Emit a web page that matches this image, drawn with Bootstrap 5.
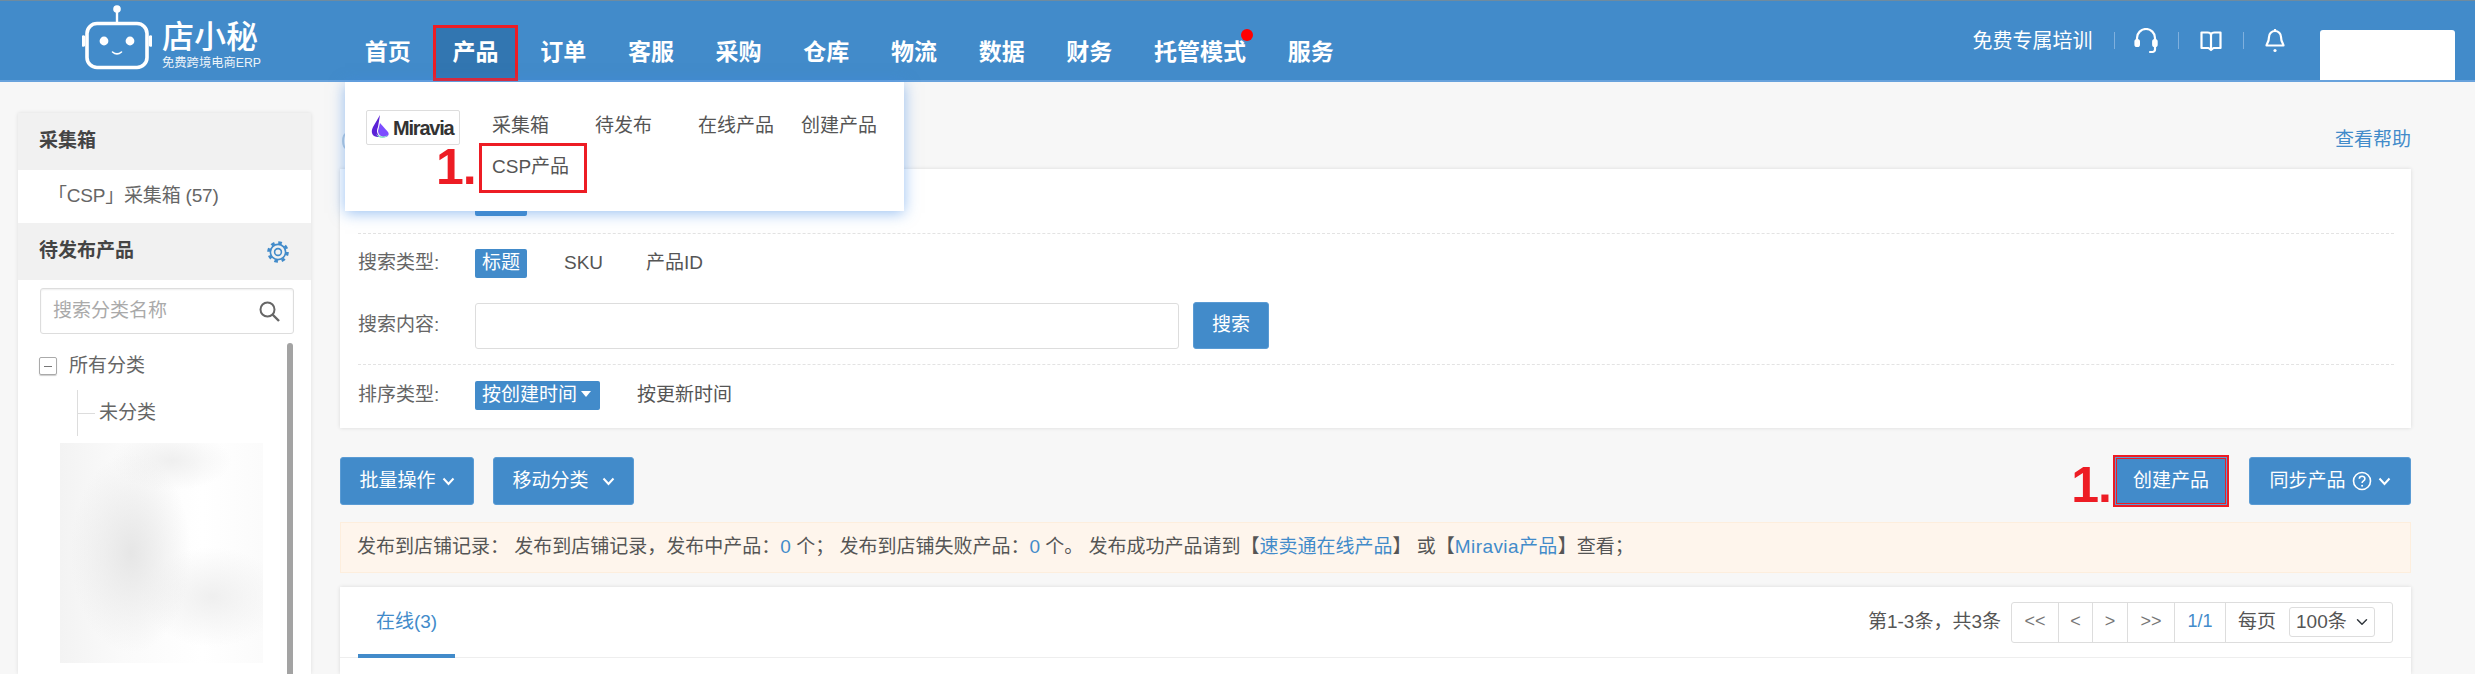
<!DOCTYPE html>
<html lang="zh-CN">
<head>
<meta charset="utf-8">
<title>店小秘</title>
<link href="https://cdn.jsdelivr.net/npm/bootstrap@5.3.0/dist/css/bootstrap.min.css" rel="stylesheet">
<style>
html,body{height:674px;overflow:hidden;}
body{background:#f7f7f7;color:#555;font-family:"Liberation Sans","Noto Sans CJK SC",sans-serif;font-size:19px;line-height:1.3;}
a{text-decoration:none;color:#428bca;}
.top-bar{height:82px;background:#428bca;border-top:1px solid #6f8b9f;border-bottom:2px solid #68a2dc;color:#fff;}
.logo-area{width:344px;padding:3px 0 0 82px;flex:none;}
.logo-text{margin-left:10px;padding-top:15px;}
.logo-main{font-size:32px;line-height:36px;font-weight:500;}
.logo-sub{font-size:12.3px;line-height:14px;margin-top:1px;opacity:.9;}
.main-nav{margin:24px 0 0;padding:0;list-style:none;}
.main-nav a{display:flex;align-items:center;height:56px;padding:0 20.85px;font-size:23px;font-weight:700;color:#fff;position:relative;}
.main-nav a.is-current{background:#3276b1;box-shadow:inset 0 0 0 3px #ed1c24;margin:0 1.35px;padding:0 19.5px;}
.red-dot{position:absolute;width:12px;height:12px;border-radius:50%;background:#f00;right:14px;top:4px;}
.top-right{margin-left:auto;padding-right:20px;align-self:stretch;}
.train{font-size:20px;padding-right:21px;}
.top-ico{width:64.5px;height:17px;border-left:1px solid #7fb0de;display:flex;align-items:center;justify-content:center;}
.user-box{width:135px;height:50px;background:#fff;border-radius:3px 3px 0 0;margin-left:13px;align-self:flex-end;}
.page-body{padding-left:18px;height:592px;}
.side-col{width:293px;margin-top:31px;background:#fff;box-shadow:0 0 4px rgba(0,0,0,.1);flex:none;overflow:hidden;}
.side-head{height:57px;background:#f1f1f1;padding:0 21px;font-weight:700;color:#444;}
.side-item{height:53px;padding-left:30px;color:#666;font-size:19px;letter-spacing:-.2px;}
.side-search{margin:8px 17px 0 22px;height:46px;border:1px solid #ddd;border-radius:3px;padding:0 12px;color:#aaa;box-shadow:inset 0 1px 2px rgba(0,0,0,.07);}
.tree-wrap{position:relative;padding:23px 0 0 21px;}
.tree-bar{position:absolute;left:269px;top:9px;width:6px;height:400px;background:#a3a3a3;border-radius:3px;}
.minus-box{width:18px;height:18px;border:1px solid #aaa;border-radius:2px;box-shadow:0 1px 1px rgba(0,0,0,.2);margin-right:12px;display:flex;align-items:center;justify-content:center;}
.minus-box i{display:block;width:8px;height:1px;background:#777;}
.tree-root{color:#666;height:18px;}
.tree-child{margin:15px 0 0 38px;height:46px;border-left:1px solid #ddd;color:#666;}
.tree-child i{display:block;width:17px;height:1px;background:#ddd;margin-right:4px;}
.blur-area{width:203px;height:220px;margin:7px 0 0 21px;background:radial-gradient(ellipse 60px 100px at 35% 50%,#e6e6e6,rgba(230,230,230,0) 100%),radial-gradient(ellipse 70px 50px at 75% 70%,#efefef,rgba(240,240,240,0)),radial-gradient(ellipse 60px 30px at 55% 8%,#efefef,rgba(240,240,240,0)),linear-gradient(90deg,#f3f3f3,#fafafa 30%,#fff 70%,#fbfbfb);}
.main-col{margin-left:29px;width:2071px;flex:none;}
.help-row{height:87px;padding-top:29px;}
.panel-box{background:#fff;box-shadow:0 0 4px rgba(0,0,0,.12);}
.search-panel{height:259px;padding:0 17px 0 18px;}
.filter-row{border-bottom:1px dashed #e3e3e3;}
.filter-first{height:65px;padding-top:18px;}
.filter-mid{height:131px;padding-top:15px;}
.filter-last{padding-top:16px;}
.filter-label{width:117px;color:#666;flex:none;}
.pick-chip{height:29px;padding:0 7px;background:#428bca;color:#fff;border-radius:2px;display:inline-flex;align-items:center;}
.pick-text{margin-left:37px;color:#555;}
.pick-text.wide{margin-left:43px;}
.caret-down{width:0;height:0;border:5px solid transparent;border-top:6px solid #fff;border-bottom:0;margin-left:4px;margin-top:-4px;}
.chip-wide{padding-right:6px;width:125px;}
.search-input{width:704px;height:46px;border:1px solid #ddd;border-radius:3px;}
.ink-btn{background:#428bca;border:1px solid #5a9bd4;color:#fff;font-size:19px;height:48px;border-radius:3px;padding:0;display:inline-flex;align-items:center;justify-content:center;}
.ink-btn:hover{background:#428bca;color:#fff;}
.w-search{width:76px;margin-left:14px;height:47px;}
.tool-row{margin-top:29px;position:relative;}
.w-batch{width:134px;gap:6px;}
.w-move{width:141px;margin-left:19px;gap:13px;}
.w-create{width:112px;margin-right:22px;outline:2px solid #ed1c24;box-shadow:inset 0 0 0 1px #ed1c24;border-radius:0;}
.w-sync{width:162px;gap:6px;}
.note-red{position:absolute;color:#ed1c24;font-weight:700;font-size:50px;line-height:1;letter-spacing:-1px;font-family:"Liberation Sans",sans-serif;}
.note-a{right:300px;top:3px;}
.note-b{left:91px;top:60px;}
.record-bar{margin-top:17px;height:51px;background:#fef5ec;border:1px solid #fdeedd;padding-left:16px;color:#555;}
.latin-wide{letter-spacing:.4px;}
.list-panel{margin-top:14px;height:87px;}
.tab-head{height:71px;border-bottom:1px solid #eee;padding:0 18px;}
.tab-on{width:97px;height:71px;border-bottom:4px solid #428bca;color:#428bca;padding-top:3px;}
.page-count{margin-right:10px;}
.pager-box{height:41px;border:1px solid #ddd;border-radius:3px;}
.pager-cell{height:100%;border-right:1px solid #ddd;color:#777;font-size:18px;}
.pc-a{width:47px}.pc-b{width:34px}.pc-c{width:35px}.pc-d{width:47px}.pc-e{width:51px;color:#428bca}
.page-size{width:86px;height:30px;padding:0 0 0 6px;margin:0 17px 0 13px;font-size:19px;color:#555;border-color:#ddd;background-position:right 5px center;background-size:14px 12px;border-radius:3px;font-family:inherit;}
.drop-panel{position:absolute;left:345px;top:82px;width:559px;height:129px;background:#fff;box-shadow:0 2px 14px rgba(66,139,230,.55);padding:28px 0 0 21px;z-index:5;}
.brand-tile{width:94px;height:35px;border:1px solid #ddd;border-radius:2px;flex:none;font-weight:700;font-size:20px;color:#333;letter-spacing:-1.2px;padding-left:2px;gap:2px;}
.drop-links{margin-left:32px;width:420px;padding-top:1px;}
.drop-links a{color:#555;height:30px;display:flex;align-items:center;}
.drop-links .d1{width:103px}.drop-links .d2{width:103px}.drop-links .d3{width:103px}.drop-links .d4{width:80px}
.csp-mark{position:relative;}
.csp-mark::after{content:"";position:absolute;left:-13px;top:-9px;width:108px;height:50px;border:3px solid #ed1c24;}
.drop-links .d5{margin-top:11px;}
.crumb-peek{position:absolute;left:342px;top:133px;width:8px;height:16px;border:2px solid #b9cbdb;border-radius:50%;}
</style>
</head>
<body>
<header class="top-bar d-flex">
  <div class="logo-area d-flex">
    <svg width="70" height="66" viewBox="0 0 70 66" fill="none" stroke="#fff" aria-hidden="true">
      <circle cx="35" cy="5" r="3.8" fill="#fff" stroke="none"/>
      <path d="M35 8v11" stroke-width="2.4"/>
      <rect x="5" y="19.5" width="60" height="44" rx="10" stroke-width="3.6"/>
      <path d="M1.5 41V33M68.5 41V33" stroke-width="3.6" stroke-linecap="round"/>
      <circle cx="22" cy="37" r="4.4" fill="#fff" stroke="none"/>
      <circle cx="48" cy="37" r="4.4" fill="#fff" stroke="none"/>
      <path d="M30.5 48c3 2.6 6 2.6 9 0" stroke-width="1.6" stroke-linecap="round"/>
    </svg>
    <div class="logo-text">
      <div class="logo-main">店小秘</div>
      <div class="logo-sub">免费跨境电商ERP</div>
    </div>
  </div>
  <ul class="main-nav d-flex">
    <li><a href="#">首页</a></li>
    <li><a href="#" class="is-current">产品</a></li>
    <li><a href="#">订单</a></li>
    <li><a href="#">客服</a></li>
    <li><a href="#">采购</a></li>
    <li><a href="#">仓库</a></li>
    <li><a href="#">物流</a></li>
    <li><a href="#">数据</a></li>
    <li><a href="#">财务</a></li>
    <li><a href="#">托管模式<span class="red-dot"></span></a></li>
    <li><a href="#">服务</a></li>
  </ul>
  <div class="top-right d-flex align-items-center">
    <span class="train">免费专属培训</span>
    <span class="top-ico">
      <svg width="24" height="26" viewBox="0 0 24 26" fill="none" stroke="#fff" stroke-width="2.2" stroke-linecap="round" aria-hidden="true"><path d="M3 13V10a9 9 0 0 1 18 0v3"/><rect x="1.5" y="12" width="3.4" height="6" rx="1.5" fill="#fff"/><rect x="19.2" y="12" width="3.4" height="6" rx="1.5" fill="#fff"/><path d="M21 18v3.5a2.5 2.5 0 0 1-2.5 2.5H16"/></svg>
    </span>
    <span class="top-ico">
      <svg width="22" height="22" viewBox="0 0 22 22" fill="none" stroke="#fff" stroke-width="2.2" stroke-linejoin="round" aria-hidden="true"><path d="M1.500 2.500h6c2 0 3.500 1 3.500 2.500 0-1.500 1.500-2.500 3.500-2.500h6v15.500h-7l-2.500 2-2.500-2h-7z"/><path d="M11 5v14"/></svg>
    </span>
    <span class="top-ico">
      <svg width="20" height="25" viewBox="0 0 20 25" fill="none" stroke="#fff" stroke-width="2.2" stroke-linejoin="round" aria-hidden="true"><path d="M10 3a6 6 0 0 0-6 6c0 5-2.500 7-2.500 8.500h17C18.500 16 16 14 16 9a6 6 0 0 0-6-6z"/><path d="M10 1v2"/><circle cx="10" cy="22.500" r="1.600" fill="#fff" stroke="none"/></svg>
    </span>
    <span class="user-box"></span>
  </div>
</header>

<div class="page-body d-flex">
  <aside class="side-col">
    <div class="side-head d-flex align-items-center">采集箱</div>
    <div class="side-item d-flex align-items-center">「CSP」采集箱 (57)</div>
    <div class="side-head d-flex align-items-center justify-content-between">
      <span>待发布产品</span>
      <svg width="24" height="24" viewBox="0 0 24 24" fill="none" stroke="#428bca" aria-hidden="true"><circle cx="12" cy="12" r="3.400" stroke-width="1.600"/><circle cx="12" cy="12" r="7.600" stroke-width="1.600"/><circle cx="12" cy="12" r="9.400" stroke-width="2.800" stroke-dasharray="3.600 3.780"/></svg>
    </div>
    <div class="side-search d-flex align-items-center justify-content-between">
      <span>搜索分类名称</span>
      <svg width="23" height="23" viewBox="0 0 23 23" fill="none" stroke="#666" stroke-width="2" aria-hidden="true"><circle cx="9.500" cy="9.500" r="7"/><path d="M14.500 14.500 21 21" stroke-width="2.400"/></svg>
    </div>
    <div class="tree-wrap">
      <div class="tree-bar"></div>
      <div class="tree-root d-flex align-items-center"><span class="minus-box"><i></i></span>所有分类</div>
      <div class="tree-child d-flex align-items-center"><i></i>未分类</div>
      <div class="blur-area"></div>
    </div>
  </aside>

  <main class="main-col">
    <div class="help-row d-flex justify-content-end align-items-center"><a href="#">查看帮助</a></div>
    <section class="panel-box search-panel">
      <div class="filter-row filter-first d-flex">
        <span class="filter-label">平台类型:</span><span class="pick-chip">全部</span>
      </div>
      <div class="filter-row filter-mid">
        <div class="d-flex align-items-center">
          <span class="filter-label">搜索类型:</span>
          <span class="pick-chip">标题</span>
          <span class="pick-text">SKU</span>
          <span class="pick-text wide">产品ID</span>
        </div>
        <div class="d-flex align-items-center mt-4">
          <span class="filter-label">搜索内容:</span>
          <input class="form-control search-input" type="text" aria-label="搜索内容">
          <button class="btn ink-btn w-search" type="button">搜索</button>
        </div>
      </div>
      <div class="filter-last d-flex align-items-center">
        <span class="filter-label">排序类型:</span>
        <span class="pick-chip chip-wide">按创建时间<i class="caret-down"></i></span>
        <span class="pick-text">按更新时间</span>
      </div>
    </section>

    <div class="tool-row d-flex align-items-center">
      <button class="btn ink-btn w-batch" type="button">批量操作<svg width="13" height="9" viewBox="0 0 13 9" fill="none" stroke="#fff" stroke-width="2" aria-hidden="true"><path d="M1.500 1.500 6.500 7l5-5.500"/></svg></button>
      <button class="btn ink-btn w-move" type="button">移动分类<svg width="13" height="9" viewBox="0 0 13 9" fill="none" stroke="#fff" stroke-width="2" aria-hidden="true"><path d="M1.500 1.500 6.500 7l5-5.500"/></svg></button>
      <span class="note-red note-a">1.</span>
      <button class="btn ink-btn w-create ms-auto" type="button">创建产品</button>
      <button class="btn ink-btn w-sync" type="button">同步产品<svg width="20" height="20" viewBox="0 0 20 20" fill="none" stroke="#fff" stroke-width="1.600" aria-hidden="true"><circle cx="10" cy="10" r="8.500"/><path d="M7.300 7.800c0-3.400 5.600-3.400 5.600 0 0 2.200-2.800 2-2.800 4.200"/><circle cx="10.100" cy="14.700" r="1" fill="#fff" stroke="none"/></svg><svg width="13" height="9" viewBox="0 0 13 9" fill="none" stroke="#fff" stroke-width="2" aria-hidden="true"><path d="M1.500 1.500 6.500 7l5-5.500"/></svg></button>
    </div>

    <div class="record-bar d-flex align-items-center">
      <span>发布到店铺记录：&nbsp;发布到店铺记录，发布中产品：<a href="#">0</a> 个；&nbsp;发布到店铺失败产品：<a href="#">0</a> 个。&nbsp;发布成功产品请到【<a href="#">速卖通在线产品</a>】 或【<a href="#" class="latin-wide">Miravia产品</a>】查看；</span>
    </div>

    <section class="panel-box list-panel">
      <div class="tab-head d-flex align-items-center">
        <a href="#" class="tab-on d-flex align-items-center justify-content-center align-self-start">在线(3)</a>
        <span class="ms-auto page-count">第1-3条，共3条</span>
        <div class="pager-box d-flex align-items-center">
          <span class="pager-cell pc-a d-flex align-items-center justify-content-center">&lt;&lt;</span>
          <span class="pager-cell pc-b d-flex align-items-center justify-content-center">&lt;</span>
          <span class="pager-cell pc-c d-flex align-items-center justify-content-center">&gt;</span>
          <span class="pager-cell pc-d d-flex align-items-center justify-content-center">&gt;&gt;</span>
          <span class="pager-cell pc-e d-flex align-items-center justify-content-center">1/1</span>
          <span class="ms-2 ps-1">每页</span>
          <select class="form-select page-size" aria-label="每页"><option>100条</option></select>
        </div>
      </div>
    </section>
  </main>
</div>

<span class="crumb-peek"></span>
<div class="drop-panel d-flex align-items-start">
  <div class="brand-tile d-flex align-items-center">
    <svg width="22" height="27" viewBox="0 0 22 27" aria-hidden="true"><path d="M11 1 4 13c-3 6 0 10 5 10h3c-4-2-5-6-3-10z" fill="#5b21d6"/><path d="M11 9l8 9c2 3-1 6-5 5-3-1-5-3-5-6z" fill="#7c4dff"/><path d="M7 20c3 5 9 5 12 1-3 2-8 2-12-1z" fill="#8ee6c8"/></svg>
    <span>Miravia</span>
  </div>
  <div class="drop-links d-flex flex-wrap">
    <a href="#" class="d1">采集箱</a>
    <a href="#" class="d2">待发布</a>
    <a href="#" class="d3">在线产品</a>
    <a href="#" class="d4">创建产品</a>
    <a href="#" class="d5 csp-mark">CSP产品</a>
  </div>
  <span class="note-red note-b">1.</span>
</div>
</body>
</html>
